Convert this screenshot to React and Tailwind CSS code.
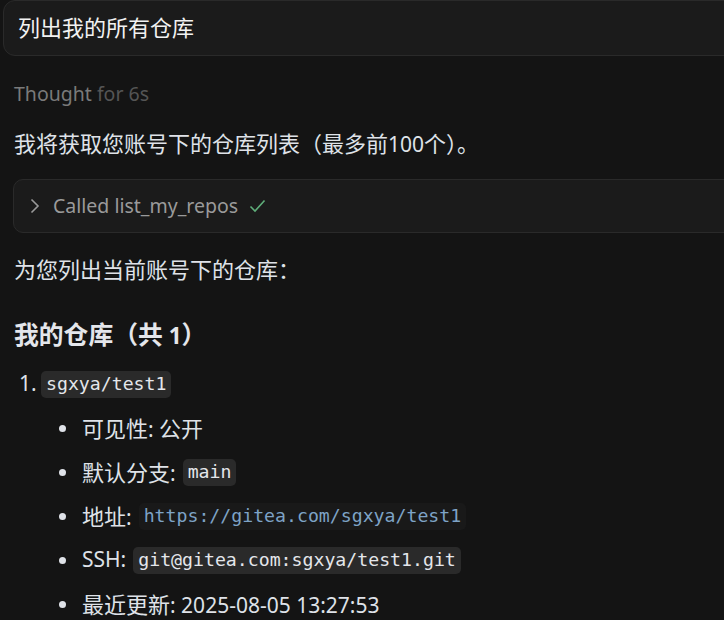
import React from "react";

const sans = { fontFamily: '"Noto Sans", "Noto Sans CJK SC", sans-serif' };
const cjk = { fontFamily: '"Noto Sans CJK SC", sans-serif' };

function T({ children, size = "text-[22px]" }) {
  const parts = String(children).split(/([\u3000-\u303f\u4e00-\u9fff\uff00-\uffef]+)/);
  return parts.map((p, i) =>
    i % 2 === 1 ? (
      <span key={i} className={size} style={cjk}>
        {p}
      </span>
    ) : (
      <React.Fragment key={i}>{p}</React.Fragment>
    )
  );
}

function Code({ children, link }) {
  return (
    <span
      className={
        "inline-flex items-center h-[27px] px-[5px] rounded-[5px] text-[18.2px] " +
        (link ? "bg-[#191919] text-[#7ea3c6]" : "bg-[#2a2a2a] text-[#e4e6eb]")
      }
      style={{ fontFamily: '"DejaVu Sans Mono", monospace' }}
    >
      {children}
    </span>
  );
}

function Bullet({ children, first }) {
  return (
    <div className={"flex items-center h-[32px] " + (first ? "mt-[12px]" : "mt-[12px]")}>
      <span className="ml-[45px] w-[7px] h-[7px] rounded-full bg-[#dfe2e8]" />
      <div className="ml-[16px] flex items-center gap-[7px] whitespace-nowrap">{children}</div>
    </div>
  );
}

export default function App() {
  return (
    <div className="w-[724px] h-[620px] overflow-hidden bg-[#141414] text-[#dfe2e8] text-[21px]" style={sans}>
      <div className="ml-[3px] w-[760px] h-[56px] rounded-[12px] border border-[#2a2a2a] bg-[#1b1b1b] flex items-center pl-[14px] pb-[3px] text-[#f2f2f2] text-[20px]">
        <T>列出我的所有仓库</T>
      </div>
      <div className="pl-[14px]">
        <div className="mt-[24px] h-[28px] leading-[28px] text-[19.5px]">
          <span className="text-[#7a7a7a]">Thought</span>
          <span className="text-[#555555]"> for 6s</span>
        </div>
        <div className="mt-[20px] h-[28px] leading-[28px] whitespace-nowrap">
          <T>我将获取您账号下的仓库列表（最多前100个）。</T>
        </div>
        <div className="mt-[23px] -ml-[1px] w-[760px] h-[54px] rounded-[10px] border border-[#2a2a2a] bg-[#1b1b1b] flex items-center pl-[15px] text-[#9a9a9a] text-[19.5px]">
          <svg width="12" height="16" viewBox="0 0 12 16" className="mr-[12px]">
            <path d="M2.5 1.5 L9 8 L2.5 14.5" fill="none" stroke="#9a9a9a" strokeWidth="1.6" />
          </svg>
          <span>Called list_my_repos</span>
          <svg width="17" height="14" viewBox="0 0 17 14" className="ml-[11px]">
            <path d="M1.5 7.5 L6 12 L15.5 1.5" fill="none" stroke="#5fae7a" strokeWidth="1.6" />
          </svg>
        </div>
        <div className="mt-[21px] h-[28px] leading-[28px] whitespace-nowrap">
          <T>为您列出当前账号下的仓库：</T>
        </div>
        <div className="mt-[35px] h-[32px] leading-[32px] text-[22.5px] font-bold text-[#e4e6eb] whitespace-nowrap">
          <T size="text-[24.8px]">我的仓库（共 1）</T>
        </div>
        <div className="mt-[19px] h-[32px] flex items-center">
          <span className="ml-[5px] w-[22px]">1.</span>
          <Code>sgxya/test1</Code>
        </div>
        <Bullet first>
          <span>
            <T>可见性: 公开</T>
          </span>
        </Bullet>
        <Bullet>
          <span>
            <T>默认分支:</T>
          </span>
          <Code>main</Code>
        </Bullet>
        <Bullet>
          <span>
            <T>地址:</T>
          </span>
          <Code link>https://gitea.com/sgxya/test1</Code>
        </Bullet>
        <Bullet>
          <span>SSH:</span>
          <Code>git@gitea.com:sgxya/test1.git</Code>
        </Bullet>
        <Bullet>
          <span>
            <T>最近更新: 2025-08-05 13:27:53</T>
          </span>
        </Bullet>
      </div>
    </div>
  );
}
